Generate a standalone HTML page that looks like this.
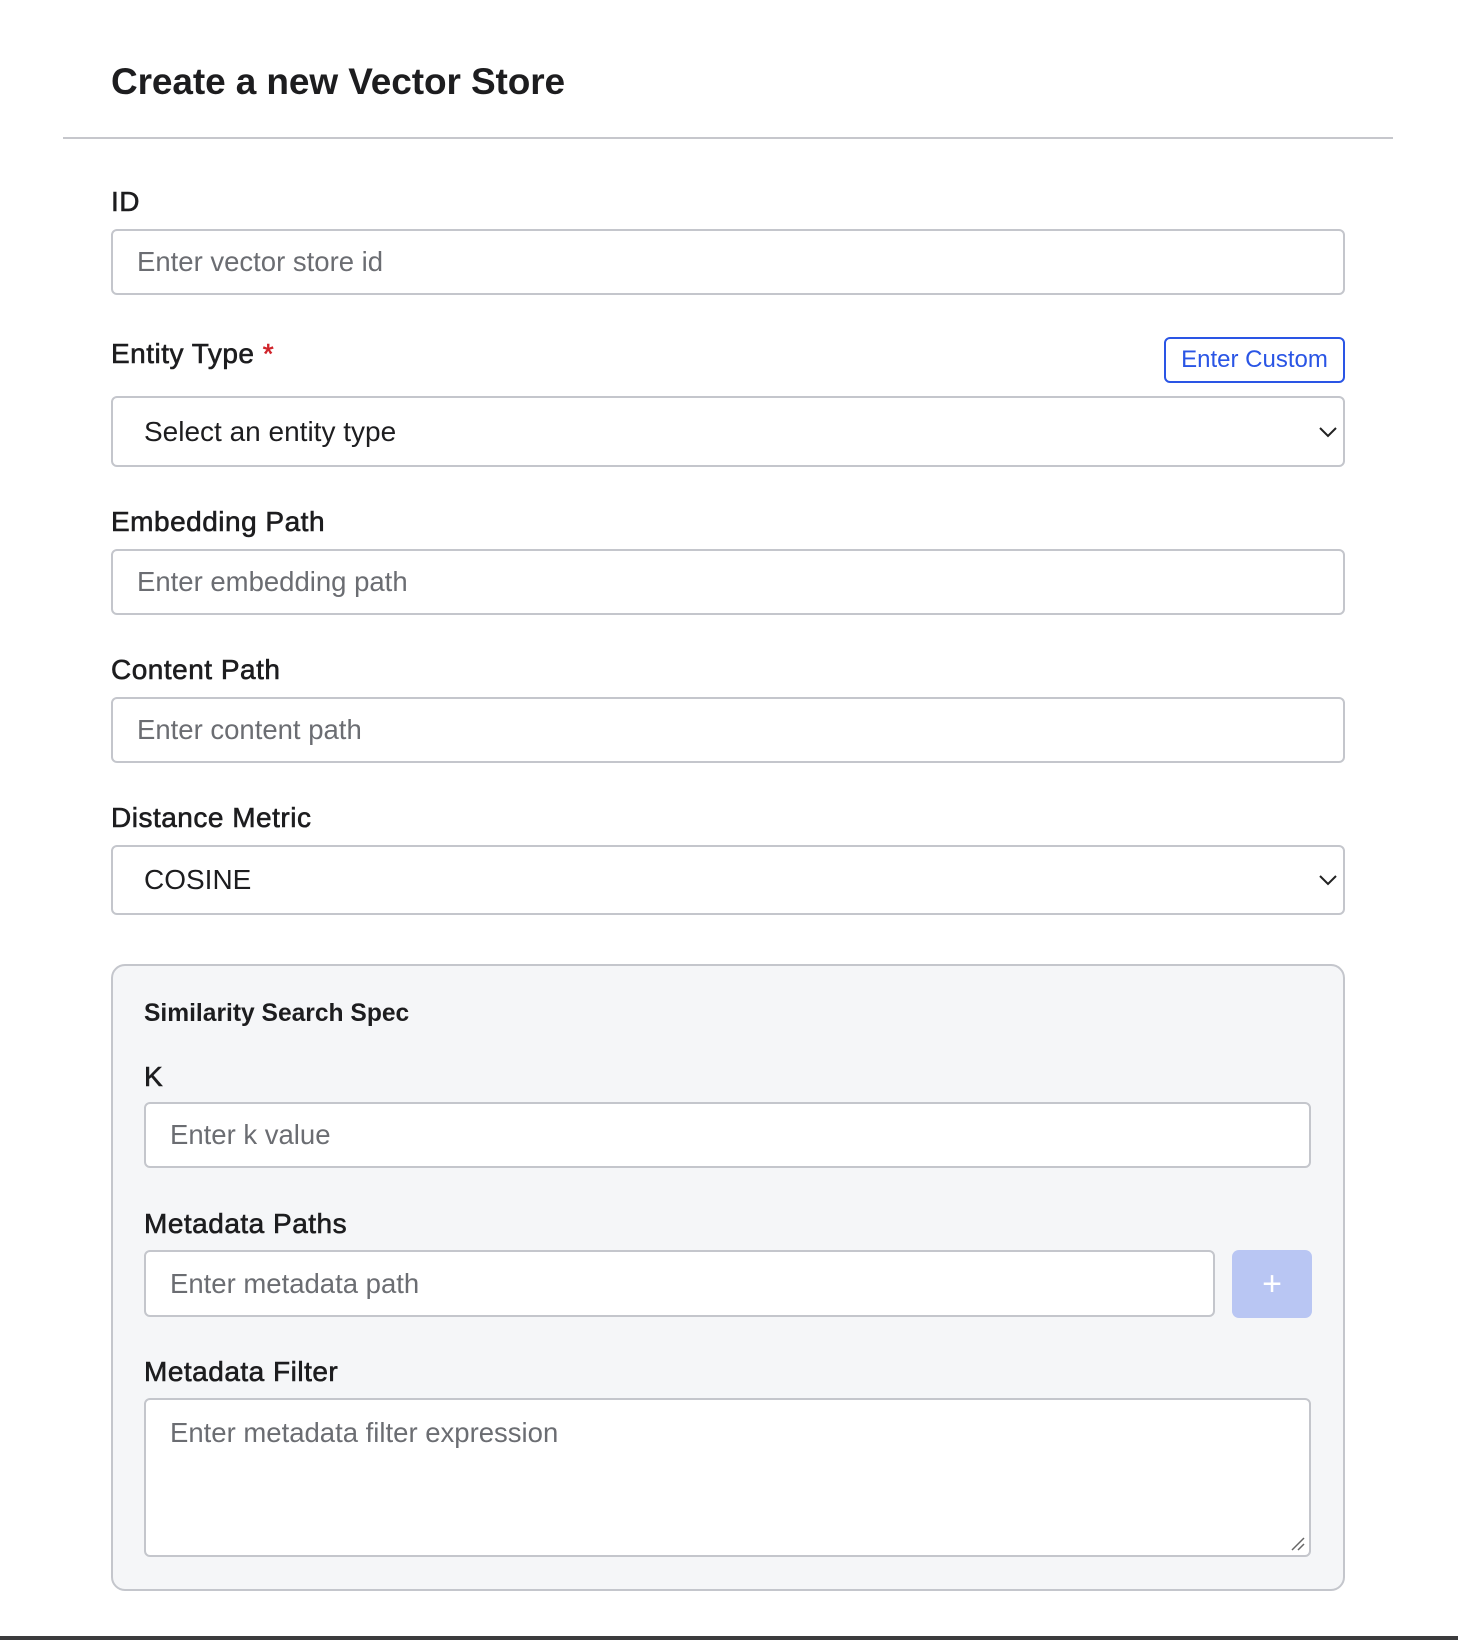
<!DOCTYPE html>
<html><head><meta charset="utf-8"><style>
*{box-sizing:border-box;margin:0;padding:0}
body{width:1458px;height:1640px;background:#fff;font-family:"Liberation Sans",Arial,sans-serif;color:#1d1d1f;position:relative;overflow:hidden}
.a{position:absolute}
h1{position:absolute;left:111px;top:61px;font-size:37px;font-weight:bold;letter-spacing:-0.1px}
.hr{left:63px;top:137px;width:1330px;height:2px;background:#c6c7cc}
.lbl{font-size:28px;color:#1d1d1f;-webkit-text-stroke:0.6px #1d1d1f;letter-spacing:0.5px}
.inp{background:#fff;border:2px solid #c4c6cc;border-radius:6px;font-size:27.5px;color:#6b6d72;padding-left:24px;display:flex;align-items:center}
.sel{color:#1d1d1f;font-size:28px;padding-left:31px}
.chev{position:absolute;right:5px;top:50%;margin-top:-6px}
</style></head><body>
<h1>Create a new Vector Store</h1>
<div class="a hr"></div>

<div class="a lbl" style="left:111px;top:186px">ID</div>
<div class="a inp" style="left:111px;top:229px;width:1234px;height:66px">Enter vector store id</div>

<div class="a lbl" style="left:111px;top:338px">Entity Type <span style="color:#d0242b;-webkit-text-stroke:0.6px #d0242b">*</span></div>
<div class="a" style="left:1164px;top:337px;width:181px;height:46px;border:2px solid #2a55e5;border-radius:6px;color:#2a55e5;font-size:24px;display:flex;align-items:center;justify-content:center">Enter Custom</div>
<div class="a inp sel" style="left:111px;top:396px;width:1234px;height:71px">Select an entity type
<svg class="chev" width="20" height="12" viewBox="0 0 20 12"><path d="M2 2l8 8 8-8" fill="none" stroke="#222" stroke-width="2"/></svg></div>

<div class="a lbl" style="left:111px;top:506px">Embedding Path</div>
<div class="a inp" style="left:111px;top:549px;width:1234px;height:66px">Enter embedding path</div>

<div class="a lbl" style="left:111px;top:654px">Content Path</div>
<div class="a inp" style="left:111px;top:697px;width:1234px;height:66px">Enter content path</div>

<div class="a lbl" style="left:111px;top:802px">Distance Metric</div>
<div class="a inp sel" style="left:111px;top:845px;width:1234px;height:70px">COSINE
<svg class="chev" width="20" height="12" viewBox="0 0 20 12"><path d="M2 2l8 8 8-8" fill="none" stroke="#222" stroke-width="2"/></svg></div>

<div class="a" style="left:111px;top:964px;width:1234px;height:627px;background:#f5f6f8;border:2px solid #c4c6cc;border-radius:14px"></div>
<div class="a" style="left:144px;top:1000px;font-size:24.6px;font-weight:bold">Similarity Search Spec</div>

<div class="a lbl" style="left:144px;top:1061px">K</div>
<div class="a inp" style="left:144px;top:1102px;width:1167px;height:66px">Enter k value</div>

<div class="a lbl" style="left:144px;top:1208px">Metadata Paths</div>
<div class="a inp" style="left:144px;top:1250px;width:1071px;height:67px">Enter metadata path</div>
<div class="a" style="left:1232px;top:1250px;width:80px;height:68px;background:#b9c6f3;border-radius:7px;color:#fff;font-size:34px;display:flex;align-items:center;justify-content:center">+</div>

<div class="a lbl" style="left:144px;top:1356px">Metadata Filter</div>
<div class="a inp" style="left:144px;top:1398px;width:1167px;height:159px;align-items:flex-start;padding-top:17px">Enter metadata filter expression
<svg class="a" style="right:3px;bottom:3px" width="16" height="16" viewBox="0 0 16 16"><path d="M2 14L14 2M8 14l6-6" stroke="#666" stroke-width="1.5"/></svg></div>

<div class="a" style="left:0;top:1636px;width:1458px;height:4px;background:#3b3b3d"></div>
</body></html>
